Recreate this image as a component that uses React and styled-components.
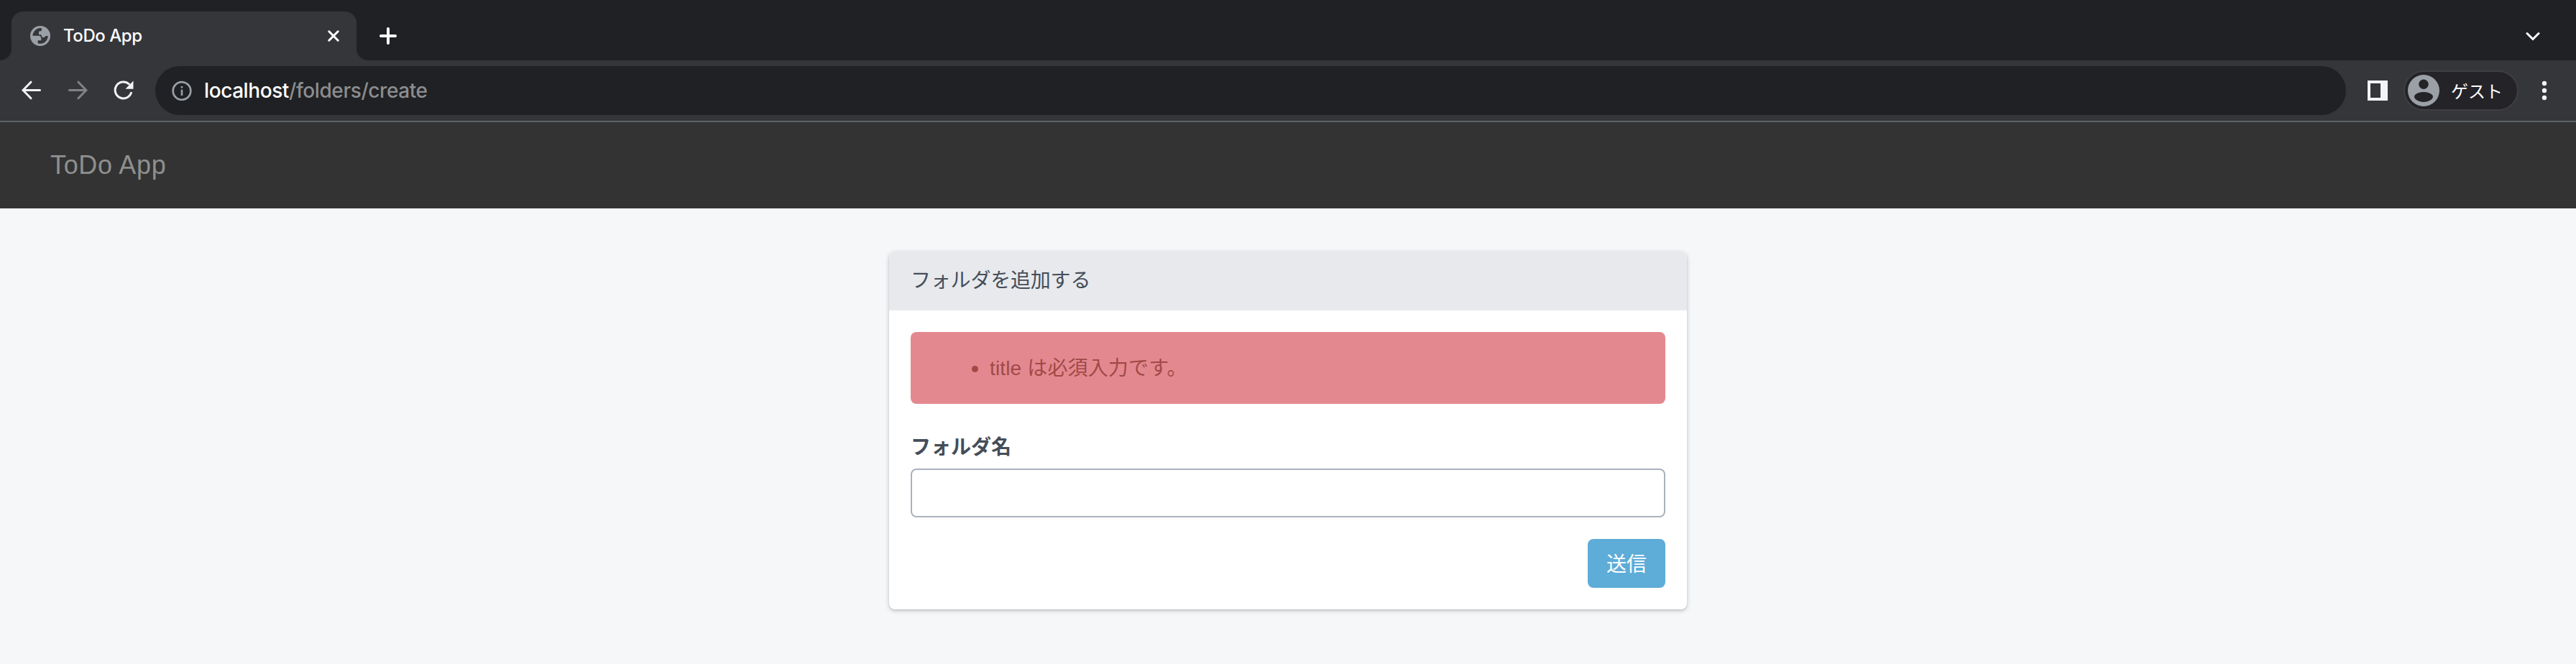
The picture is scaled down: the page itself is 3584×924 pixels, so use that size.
import React from "react";
import styled, { createGlobalStyle } from "styled-components";

const GlobalStyle = createGlobalStyle`
  *, *::before, *::after { box-sizing: border-box; }
  body {
    margin: 0;
    background: #f6f7f9;
    font-family: "Liberation Sans", "Noto Sans CJK JP", sans-serif;
  }
`;

const Page = styled.div`
  min-height: 924px;
  display: flex;
  flex-direction: column;
  background: #f6f7f9;
`;

const TabStrip = styled.div`
  height: 84px;
  padding: 16px 50px 0 16px;
  display: flex;
  background: #202124;
`;

const Tab = styled.div`
  position: relative;
  width: 480px;
  height: 68px;
  padding: 0 24px 0 26px;
  display: flex;
  align-items: center;
  border-radius: 16px 16px 0 0;
  background: #35363a;

  &::before,
  &::after {
    content: "";
    position: absolute;
    bottom: 0;
    width: 16px;
    height: 16px;
  }
  &::before {
    left: -16px;
    background: radial-gradient(circle at 0 0, transparent 15.5px, #35363a 16.5px);
  }
  &::after {
    right: -16px;
    background: radial-gradient(circle at 100% 0, transparent 15.5px, #35363a 16.5px);
  }
`;

const TabTitle = styled.span`
  flex: 1;
  margin-left: 18px;
  font-family: Inter, sans-serif;
  font-size: 24px;
  font-weight: 450;
  line-height: 28px;
  letter-spacing: -0.45px;
  color: #fff;
`;

const StripButton = styled.button`
  display: flex;
  align-items: center;
  height: 68px;
  margin: 0 0 0 ${(p) => p.$gap || "0"};
  padding: 0;
  border: 0;
  background: none;
`;

const Toolbar = styled.div`
  height: 86px;
  padding: 8px 40px 8px 30px;
  display: flex;
  align-items: flex-start;
  border-bottom: 2px solid #5f6368;
  background: #35363a;
`;

const NavButtons = styled.div`
  width: 186px;
  height: 68px;
  display: flex;
  align-items: center;
  gap: 36px;
`;

const AddressBar = styled.div`
  flex: 1;
  height: 68px;
  padding-left: 23px;
  display: flex;
  align-items: center;
  border-radius: 34px;
  background: #202124;
`;

const Url = styled.span`
  margin-left: 17px;
  font-family: Inter, sans-serif;
  font-size: 28px;
  font-weight: 500;
  line-height: 34px;
  letter-spacing: -0.42px;
  color: #8c8d8f;
`;

const Host = styled.span`
  color: #fff;
`;

const ToolbarEnd = styled.div`
  height: 68px;
  margin-left: 30px;
  display: flex;
  align-items: center;
`;

const ProfilePill = styled.div`
  width: 160px;
  height: 56px;
  margin: 0 32px 0 22px;
  padding-left: 4px;
  display: flex;
  align-items: center;
  gap: 16px;
  border: 2px solid #3f3e43;
  border-radius: 28px;
  background: #242328;
  color: #fff;
  font: 400 24px/36px "Noto Sans CJK JP", sans-serif;
`;

const Navbar = styled.header`
  height: 120px;
  padding: 0 70px;
  display: flex;
  align-items: center;
  background: #333;
`;

const Brand = styled.a`
  font-size: 36px;
  line-height: 44px;
  letter-spacing: 0.65px;
  color: #8f8f8f;
`;

const Card = styled.section`
  width: 1110px;
  margin: 60px auto 0;
  border-radius: 8px;
  background: #fff;
  box-shadow: 0 2px 6px rgba(0, 0, 0, 0.2), 0 1px 2px rgba(0, 0, 0, 0.1);
  color: #454d59;
  font-size: 28px;
`;

const CardHeader = styled.h1`
  height: 82px;
  margin: 0;
  padding: 21px 30px 20px;
  border-radius: 8px 8px 0 0;
  background: #e7e9ed;
  font-size: 28px;
  font-weight: 400;
  line-height: 40px;
  letter-spacing: -0.2px;
`;

const CardBody = styled.div`
  padding: 30px;
`;

const Alert = styled.div`
  height: 100px;
  margin-bottom: 40px;
  padding: 31px 30px 29px;
  border-radius: 8px;
  background: #e48890;
  color: #a04a46;
`;

const ErrorList = styled.ul`
  margin: 0;
  padding: 0 0 0 50px;
  list-style: none;
`;

const ErrorItem = styled.li`
  display: flex;
  align-items: center;
  line-height: 40px;
  letter-spacing: 0.15px;

  &::before {
    content: "";
    width: 9px;
    height: 9px;
    margin: 0 16px 0 5px;
    border-radius: 50%;
    background: currentColor;
  }
`;

const Label = styled.label`
  display: block;
  padding-top: 1px;
  margin-bottom: 9px;
  font-weight: 700;
  line-height: 40px;
`;

const TextInput = styled.input`
  display: block;
  width: 100%;
  height: 68px;
  padding: 12px 24px;
  border: 2px solid #aab2bd;
  border-radius: 8px;
  background: #fff;
  font: inherit;
`;

const Actions = styled.div`
  margin-top: 30px;
  display: flex;
  justify-content: flex-end;
`;

const SubmitButton = styled.button`
  width: 108px;
  height: 68px;
  padding: 0 0 2px;
  border: 0;
  border-radius: 8px;
  background: #5eacd8;
  color: #fff;
  font: 400 28px/40px "Noto Sans CJK JP", sans-serif;
`;

const GlobeIcon = () => (
  <svg width="28" height="28" viewBox="0 0 28 28">
    <circle cx="14" cy="14" r="14" fill="#9aa0a6" />
    <path
      fill="#35363a"
      d="M15.8 3C9 2.600 4.200 7 3.300 13.800h8c2.500 0 4 1.500 4 3.900v2.600h-4.600v3.900c7 2.300 14-2.600 14-10.100h-3.200c-1 1.700-2.400 2.600-4.200 2-1.700-.6-.8-3.500-2.600-3.900H12V8.900c0-1.300.9-1.700 2.300-1.700h1.500Z"
    />
  </svg>
);

const CloseIcon = () => (
  <svg width="16" height="16" viewBox="0 0 16 16" stroke="#fff" strokeWidth="3" strokeLinecap="round">
    <path d="M1.800 1.800 14.200 14.200M14.200 1.800 1.800 14.200" />
  </svg>
);

const PlusIcon = () => (
  <svg width="24" height="24" viewBox="0 0 24 24" stroke="#fff" strokeWidth="4" strokeLinecap="round">
    <path d="M12 2v20M2 12h20" />
  </svg>
);

const ChevronIcon = () => (
  <svg width="20" height="14" viewBox="0 0 20 14" fill="none" stroke="#fff" strokeWidth="3">
    <path d="m2 3.500 8 8 8-8" strokeLinecap="round" />
  </svg>
);

const ArrowIcon = ({ forward }) => (
  <svg width="28" height="28" viewBox="0 0 28 28" fill="none" stroke={forward ? "#828386" : "#f1f3f4"} strokeWidth="3" strokeLinecap="round">
    <path d={forward ? "M2.500 13.500h23M15 2.200l11 11.300L15 24.800" : "M25.500 13.500h-23M13 2.200 2 13.500l11 11.300"} />
  </svg>
);

const ReloadIcon = () => (
  <svg width="28" height="28" viewBox="0 0 28 28" fill="none">
    <path d="M21.500 5A11.500 11.500 0 1 0 24.500 17.300" stroke="#f1f3f4" strokeWidth="3" strokeLinecap="round" />
    <path d="M27.500.5v11.200H16.500Z" fill="#f1f3f4" />
  </svg>
);

const InfoIcon = () => (
  <svg width="28" height="28" viewBox="0 0 28 28">
    <circle cx="14" cy="14.500" r="12.300" fill="none" stroke="#9aa0a6" strokeWidth="2.700" />
    <path fill="#9aa0a6" d="M12.700 8h2.600v2.600h-2.600zM12.700 12.800h2.600v8.200h-2.600z" />
  </svg>
);

const SidePanelIcon = () => (
  <svg width="28" height="28" viewBox="0 0 28 28">
    <path fill="#f1f3f4" fillRule="evenodd" d="M0 0h28v28H0ZM4 4v20h14V4Z" />
  </svg>
);

const AvatarIcon = () => (
  <svg width="44" height="44" viewBox="0 0 44 44">
    <circle cx="22" cy="22" r="22" fill="#9aa0a6" />
    <circle cx="22" cy="13.300" r="6.700" fill="#242328" />
    <path fill="#242328" d="M22 24c7 0 13 3 13 6.500S29 38 22 38 9 34 9 30.500 15 24 22 24Z" />
  </svg>
);

const MenuIcon = () => (
  <svg width="8" height="28" viewBox="0 0 8 28" fill="#f1f3f4">
    <circle cx="4" cy="4" r="3.200" />
    <circle cx="4" cy="14" r="3.200" />
    <circle cx="4" cy="24" r="3.200" />
  </svg>
);

const Spacer = styled.div`
  flex: 1;
`;

export default function App() {
  return (
    <Page>
      <GlobalStyle />
      <TabStrip>
        <Tab>
          <GlobeIcon />
          <TabTitle>ToDo App</TabTitle>
          <CloseIcon />
        </Tab>
        <StripButton $gap="32px" aria-label="New tab"><PlusIcon /></StripButton>
        <Spacer />
        <StripButton aria-label="Search tabs"><ChevronIcon /></StripButton>
      </TabStrip>
      <Toolbar>
        <NavButtons>
          <ArrowIcon />
          <ArrowIcon forward />
          <ReloadIcon />
        </NavButtons>
        <AddressBar>
          <InfoIcon />
          <Url><Host>localhost</Host>/folders/create</Url>
        </AddressBar>
        <ToolbarEnd>
          <SidePanelIcon />
          <ProfilePill>
            <AvatarIcon />
            <span>ゲスト</span>
          </ProfilePill>
          <MenuIcon />
        </ToolbarEnd>
      </Toolbar>
      <Navbar>
        <Brand>ToDo App</Brand>
      </Navbar>
      <Card>
        <CardHeader>フォルダを追加する</CardHeader>
        <CardBody>
          <Alert>
            <ErrorList>
              <ErrorItem>title は必須入力です。</ErrorItem>
            </ErrorList>
          </Alert>
          <form>
            <Label htmlFor="title">フォルダ名</Label>
            <TextInput id="title" type="text" />
            <Actions>
              <SubmitButton type="button">送信</SubmitButton>
            </Actions>
          </form>
        </CardBody>
      </Card>
    </Page>
  );
}
